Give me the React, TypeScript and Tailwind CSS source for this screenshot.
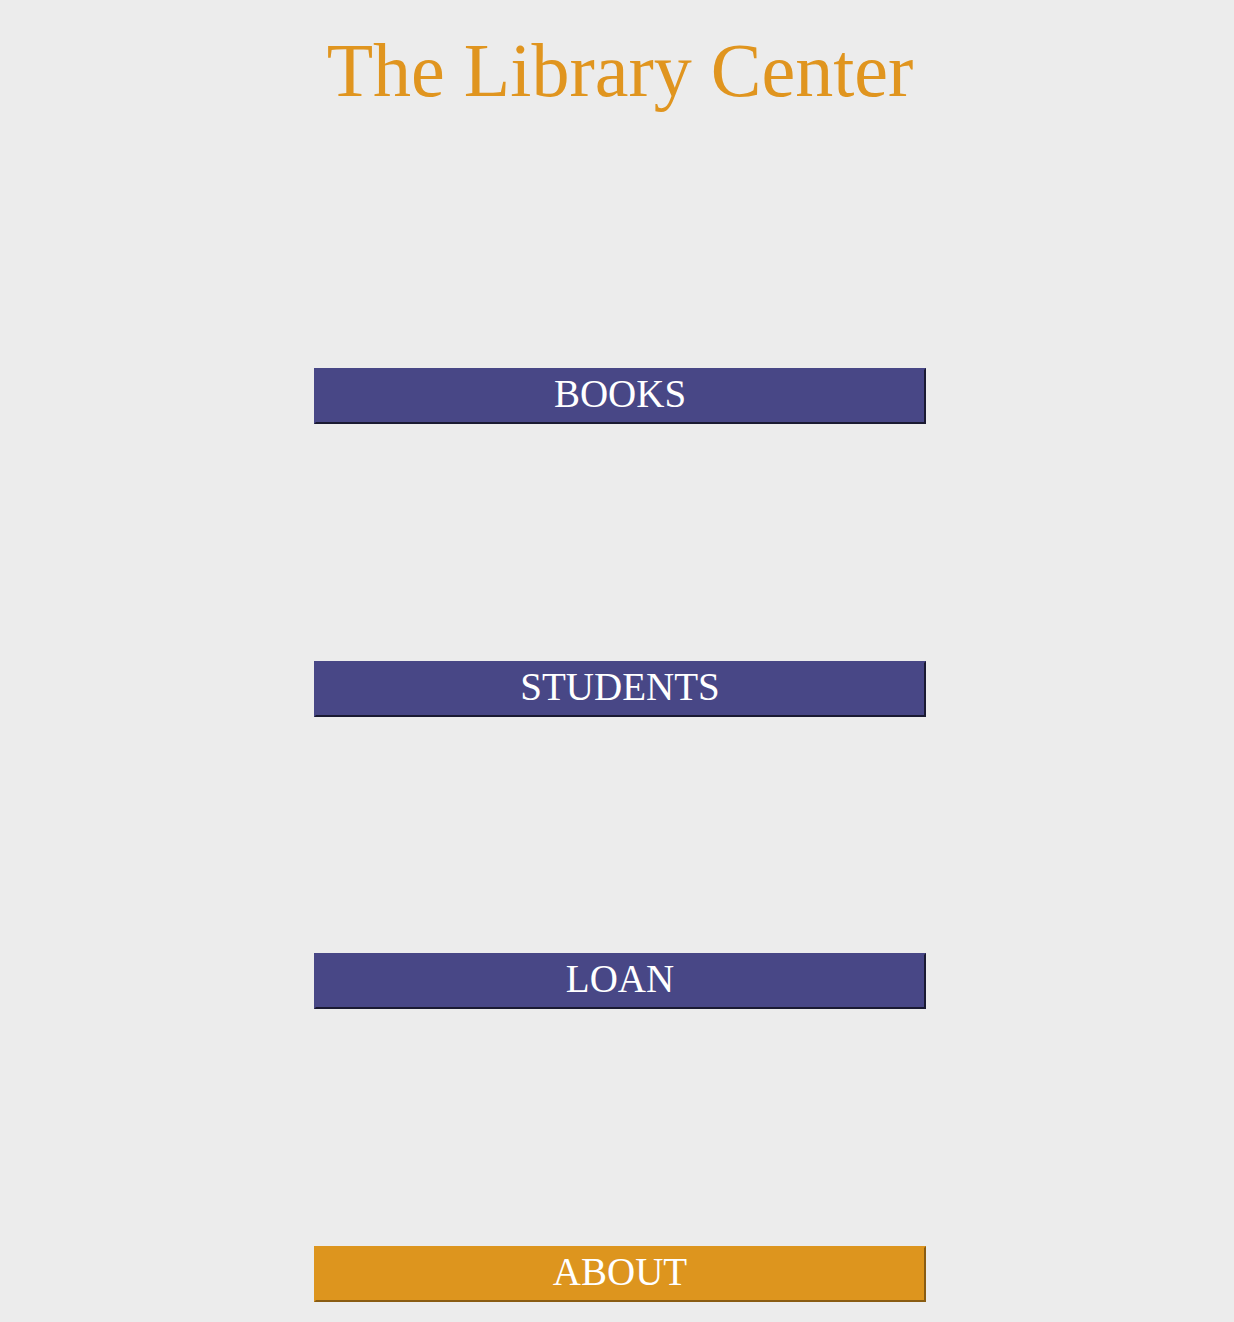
import React from 'react';

const links = [
  { label: 'BOOKS', active: false },
  { label: 'STUDENTS', active: false },
  { label: 'LOAN', active: false },
  { label: 'ABOUT', active: true },
];

export default function App() {
  return (
    <div className="min-h-[1322px] bg-[#ececec] pl-[6px] font-['Liberation_Serif',serif] flex flex-col items-center">
      <h1 className="mt-[22px] text-[76px] leading-[96px] text-[#e0951f]">The Library Center</h1>
      <nav className="mt-[250px] flex flex-col gap-[236.7px]">
        {links.map(link => (
          <button
            key={link.label}
            className={
              'w-[612px] h-[56px] pb-[5px] border-2 [border-style:outset] text-[39px] leading-none text-white ' +
              (link.active
                ? 'bg-[#dd951e] border-[#dd951e]'
                : 'bg-[#484786] border-[#484786]')
            }
          >
            {link.label}
          </button>
        ))}
      </nav>
    </div>
  );
}
